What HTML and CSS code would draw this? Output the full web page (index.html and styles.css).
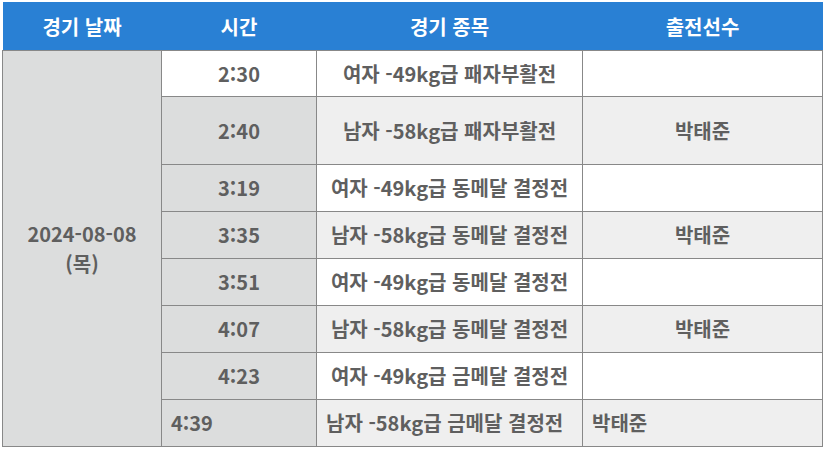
FILE: index.html
```html
<!DOCTYPE html>
<html lang="ko">
<head>
<meta charset="utf-8">
<link rel="stylesheet" href="styles.css">
</head>
<body>
<table class="schedule">
  <colgroup>
    <col class="c-date">
    <col class="c-time">
    <col class="c-event">
    <col class="c-player">
  </colgroup>
  <thead>
    <tr class="head">
      <th>경기 날짜</th>
      <th>시간</th>
      <th>경기 종목</th>
      <th>출전선수</th>
    </tr>
  </thead>
  <tbody>
    <tr class="r1">
      <td class="date" rowspan="8">2024-08-08<br>(목)</td>
      <td class="time plain">2:30</td>
      <td>여자 -49kg급 패자부활전</td>
      <td></td>
    </tr>
    <tr class="r2 alt">
      <td class="time">2:40</td>
      <td>남자 -58kg급 패자부활전</td>
      <td>박태준</td>
    </tr>
    <tr class="r">
      <td class="time">3:19</td>
      <td>여자 -49kg급 동메달 결정전</td>
      <td></td>
    </tr>
    <tr class="r alt">
      <td class="time">3:35</td>
      <td>남자 -58kg급 동메달 결정전</td>
      <td>박태준</td>
    </tr>
    <tr class="r">
      <td class="time">3:51</td>
      <td>여자 -49kg급 동메달 결정전</td>
      <td></td>
    </tr>
    <tr class="r alt">
      <td class="time">4:07</td>
      <td>남자 -58kg급 동메달 결정전</td>
      <td>박태준</td>
    </tr>
    <tr class="r">
      <td class="time">4:23</td>
      <td>여자 -49kg급 금메달 결정전</td>
      <td></td>
    </tr>
    <tr class="r alt last">
      <td class="time">4:39</td>
      <td>남자 -58kg급 금메달 결정전</td>
      <td>박태준</td>
    </tr>
  </tbody>
</table>
</body>
</html>
```
FILE: styles.css
```css
html, body {
  margin: 0;
  padding: 0;
  background: #ffffff;
}
body {
  padding: 2px 0 0 2px;
  font-family: "Noto Sans CJK KR", "Noto Sans", sans-serif;
}
.schedule {
  border-collapse: collapse;
  table-layout: fixed;
  width: 820px;
  font-size: 20px;
  font-weight: 700;
  color: #5f5f5f;
}
.c-date { width: 159px; }
.c-time { width: 155px; }
.c-event { width: 266px; }
.c-player { width: 240px; }
.head th {
  background: #2980d4;
  color: #ffffff;
  height: 48px;
  padding: 0;
  font-weight: 700;
  text-align: center;
  vertical-align: middle;
}
.schedule td {
  border: 1px solid #888888;
  padding: 0 10px;
  text-align: center;
  vertical-align: middle;
  background: #ffffff;
  line-height: 30px;
}
.schedule .date {
  background: #dcdddd;
}
.schedule .time {
  background: #dcdddd;
}
.schedule .time.plain {
  background: #ffffff;
}
.schedule .alt td {
  background: #efefef;
}
.schedule .alt td.time {
  background: #dcdddd;
}
.r1 td { height: 45px; }
.r2 td { height: 67px; }
.r td { height: 46px; }
.schedule .last td {
  text-align: left;
  padding-left: 9px;
}
```
